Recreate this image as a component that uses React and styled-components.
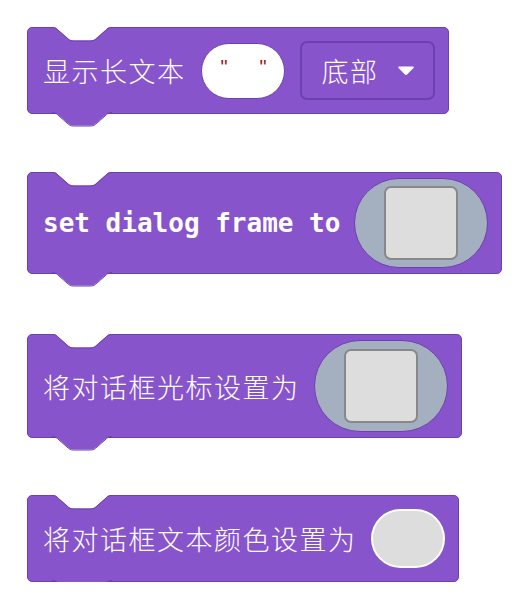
import React from 'react'
import styled, { createGlobalStyle } from 'styled-components'

const FILL = '#8854cc'
const EDGE = '#6c40ae'

const GlobalStyle = createGlobalStyle`
  html, body {
    margin: 0;
    background: #ffffff;
  }
  body {
    font-family: "Noto Sans CJK SC", "Noto Sans", sans-serif;
  }
`

const Page = styled.div`
  display: flex;
  flex-direction: column;
  align-items: flex-start;
  gap: 58px;
  padding: 27px 0 0 27px;
`

const Body = styled.div`
  position: relative;
  display: inline-flex;
  align-items: center;
  gap: ${p => p.gap || 14}px;
  min-height: 75px;
  margin-top: ${p => p.shift || 0}px;
  padding: 5px 13px 5px 15px;
  background: ${FILL};
  border: 1px solid ${EDGE};
  border-radius: 5px;
`

const Notch = styled.svg`
  position: absolute;
  left: 24px;
  top: -1px;
`

const Tab = styled.svg`
  position: absolute;
  left: 24px;
  bottom: -15px;
`

const Label = styled.span`
  color: #ffffff;
  font-family: ${p => p.mono
    ? '"DejaVu Sans Mono", monospace'
    : '"Noto Sans CJK SC", sans-serif'};
  font-size: ${p => (p.mono ? 26 : 27)}px;
  font-weight: ${p => (p.mono ? 700 : 300)};
  letter-spacing: ${p => (p.mono ? 0 : 1.5)}px;
  white-space: nowrap;
  line-height: 1;
`

const StringField = styled.div`
  display: flex;
  justify-content: space-between;
  align-items: center;
  box-sizing: border-box;
  width: 84px;
  height: 56px;
  padding: 0 17px 8px 19px;
  background: #ffffff;
  border: 1px solid ${EDGE};
  border-radius: 28px;
`

const Quote = styled.span`
  color: #a31515;
  font-family: "Liberation Sans", sans-serif;
  font-size: 20px;
  line-height: 1;
`

const Dropdown = styled.div`
  display: flex;
  align-items: center;
  gap: 18px;
  box-sizing: border-box;
  width: 135px;
  height: 59px;
  padding: 0 0 0 20px;
  border: 2px solid ${EDGE};
  border-radius: 7px;
`

const Oval = styled.div`
  display: flex;
  align-items: center;
  justify-content: center;
  box-sizing: border-box;
  width: 134px;
  height: ${p => p.h || 90}px;
  background: #a4b0c0;
  border: 1.5px solid ${EDGE};
  border-radius: 46px;
`

const Swatch = styled.div`
  box-sizing: border-box;
  width: 74px;
  height: 74px;
  background: #dddddd;
  border: 2px solid #888888;
  border-radius: 7px;
`

const ColorField = styled.div`
  box-sizing: border-box;
  width: 74px;
  height: 59px;
  background: #dddddd;
  border: 2px solid #ffffff;
  border-radius: 30px;
`

function Caret() {
  return (
    <svg width="18" height="11" viewBox="0 0 18 11">
      <path d="M2 1.5 H16 Q17.5 1.5 16.5 3 L10.3 9.3 Q9 10.5 7.7 9.3 L1.5 3 Q0.5 1.5 2 1.5 Z" fill="#ffffff" />
    </svg>
  )
}

const notchFill = 'M0 0 C3.5 0 4.5 1 7 3.5 L15 10.5 C17 12.5 18.5 13.5 22 13.5 H38 C41.5 13.5 43 12.5 45 10.5 L53 3.5 C55.5 1 56.5 0 60 0 Z'
const notchLine = 'M0 0.5 C3.5 0.5 4.5 1.5 7 4 L15 11 C17 13 18.5 14 22 14 H38 C41.5 14 43 13 45 11 L53 4 C55.5 1.5 56.5 0.5 60 0.5'

function Block({ gap, shift, children }) {
  return (
    <Body gap={gap} shift={shift}>
      <Notch width="60" height="16" viewBox="0 0 60 16">
        <path d={notchFill} fill="#ffffff" />
        <path d={notchLine} fill="none" stroke={EDGE} strokeWidth="1" />
      </Notch>
      {children}
      <Tab width="60" height="16" viewBox="0 0 60 16">
        <path d={notchFill} fill={FILL} />
        <path d={notchLine} fill="none" stroke={EDGE} strokeWidth="1" />
      </Tab>
    </Body>
  )
}

export default function App() {
  return (
    <>
      <GlobalStyle />
      <Page>
        <Block gap={15}>
          <Label>显示长文本</Label>
          <StringField>
            <Quote>"</Quote>
            <Quote>"</Quote>
          </StringField>
          <Dropdown>
            <Label>底部</Label>
            <Caret />
          </Dropdown>
        </Block>

        <Block>
          <Label mono>set dialog frame to</Label>
          <Oval>
            <Swatch />
          </Oval>
        </Block>

        <Block shift={2}>
          <Label>将对话框光标设置为</Label>
          <Oval h={92}>
            <Swatch />
          </Oval>
        </Block>

        <Block shift={-1}>
          <Label>将对话框文本颜色设置为</Label>
          <ColorField />
        </Block>
      </Page>
    </>
  )
}
